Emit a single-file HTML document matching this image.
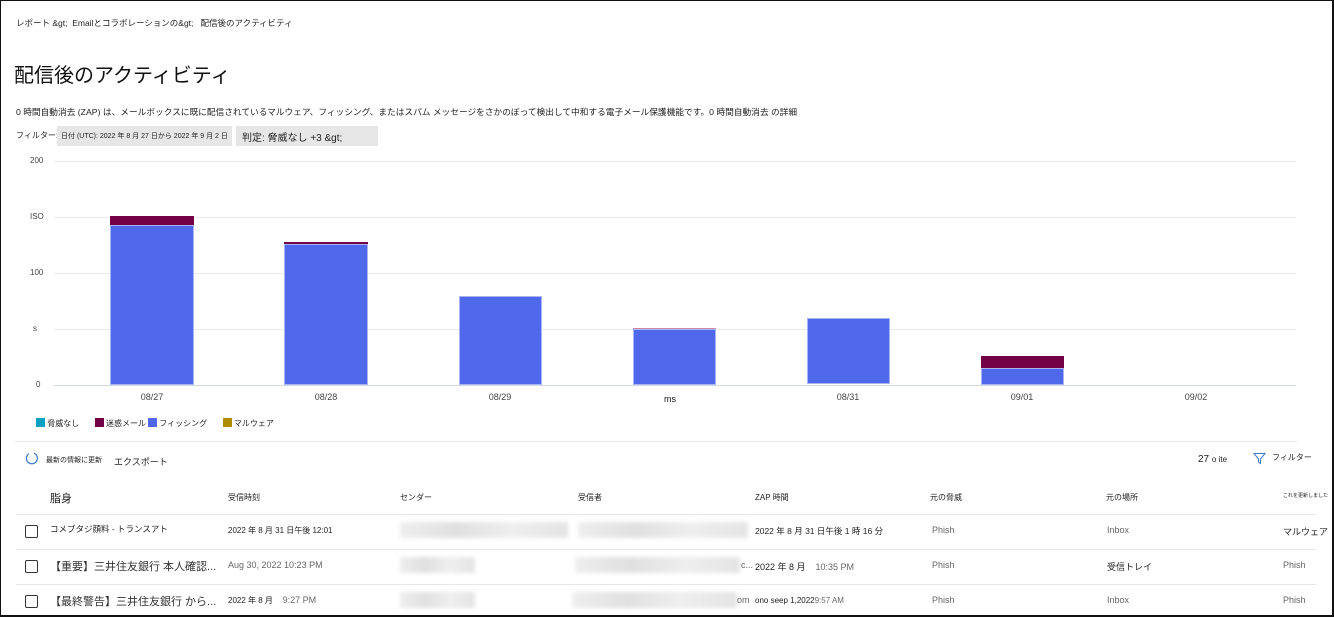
<!DOCTYPE html>
<html><head><meta charset="utf-8"><style>
*{margin:0;padding:0;box-sizing:border-box}
body{width:1334px;height:617px;background:#fff;font-family:"Liberation Sans","Noto Sans CJK JP",sans-serif;color:#222;position:relative;overflow:hidden}
.frame{position:absolute;left:0;top:0;width:1334px;height:617px;border:1px solid #111;border-right:2px solid #111;border-bottom:2px solid #111}
.a{position:absolute;white-space:nowrap}
.g{position:absolute;left:54px;width:1242px;height:1px;background:#e8e8ec}
.bar{position:absolute;background:#5068ec;border:1px solid #a9b4f5}
.pu{position:absolute;background:#730046}
.yl{position:absolute;left:30px;font-size:8px;color:#444}
.xl{position:absolute;top:392px;font-size:9px;color:#444;width:60px;text-align:center}
.row{position:absolute;left:16px;width:1300px;height:1px;background:#e6e6e6}
.cb{position:absolute;left:25px;width:13px;height:13px;border:1px solid #333;border-radius:2px}
.c{position:absolute;font-size:9px;white-space:nowrap}
.blur{position:absolute;height:16px;background:linear-gradient(90deg,#eee,#e0e0e0,#eee,#e4e4e4);filter:blur(2px)}
.gr{color:#666}
</style></head><body>
<div class="frame"></div>
<div class="a" style="left:16px;top:17px;font-size:8.5px">レポート &amp;gt;&nbsp; Emailとコラボレーションの&amp;gt;&nbsp;&nbsp; 配信後のアクティビティ</div>
<div class="a" style="left:14px;top:59px;font-size:20px;color:#111">配信後のアクティビティ</div>
<div class="a" style="left:16px;top:105px;font-size:8.7px">0 時間自動消去 (ZAP) は、メールボックスに既に配信されているマルウェア、フィッシング、またはスパム メッセージをさかのぼって検出して中和する電子メール保護機能です。0 時間自動消去 の詳細</div>
<div class="a" style="left:16px;top:130px;font-size:8px">フィルター:</div>
<div class="a" style="left:57px;top:126px;width:175px;height:20px;background:#e6e6e6;font-size:7px;padding:5px 4px">日付 (UTC): 2022 年 8 月 27 日から 2022 年 9 月 2 日</div>
<div class="a" style="left:236px;top:126px;width:142px;height:20px;background:#e6e6e6;font-size:10px;padding:3px 6px">判定: 脅威なし +3 &amp;gt;</div>

<div class="yl" style="top:156px">200</div>
<div class="yl" style="top:212px">ISO</div>
<div class="yl" style="top:268px">100</div>
<div class="yl" style="top:324px;left:33px">s</div>
<div class="yl" style="top:380px;left:36px">0</div>
<div class="g" style="top:161px"></div>
<div class="g" style="top:217px"></div>
<div class="g" style="top:273px"></div>
<div class="g" style="top:329px"></div>
<div class="g" style="top:385px;background:#d5d9e6"></div>

<div class="pu" style="left:110px;top:216px;width:84px;height:9px"></div>
<div class="bar" style="left:110px;top:225px;width:84px;height:160px"></div>
<div class="pu" style="left:284px;top:242px;width:84px;height:2px"></div>
<div class="bar" style="left:284px;top:244px;width:84px;height:141px"></div>
<div class="bar" style="left:459px;top:296px;width:83px;height:89px"></div>
<div class="pu" style="left:633px;top:328px;width:83px;height:1px;background:#c78aa8"></div>
<div class="bar" style="left:633px;top:329px;width:83px;height:56px"></div>
<div class="bar" style="left:807px;top:318px;width:83px;height:66px"></div>
<div class="pu" style="left:981px;top:356px;width:83px;height:12px"></div>
<div class="bar" style="left:981px;top:368px;width:83px;height:17px"></div>

<div class="xl" style="left:122px">08/27</div>
<div class="xl" style="left:296px">08/28</div>
<div class="xl" style="left:470px">08/29</div>
<div class="xl" style="left:640px;top:394px;color:#111">ms</div>
<div class="xl" style="left:818px">08/31</div>
<div class="xl" style="left:992px">09/01</div>
<div class="xl" style="left:1166px">09/02</div>

<div class="a" style="left:36px;top:418px;font-size:8px">
<span style="display:inline-block;width:9px;height:9px;background:#0aa0c4;vertical-align:-1px"></span> 脅威なし&nbsp;&nbsp;&nbsp;&nbsp;&nbsp;&nbsp;
<span style="display:inline-block;width:9px;height:9px;background:#730046;vertical-align:-1px"></span> 迷惑メール<span style="display:inline-block;width:9px;height:9px;background:#5068ec;vertical-align:-1px;margin-left:2px"></span> フィッシング&nbsp;&nbsp;&nbsp;&nbsp;&nbsp;&nbsp;
<span style="display:inline-block;width:9px;height:9px;background:#b08c00;vertical-align:-1px"></span> マルウェア</div>
<div class="a" style="left:15px;top:441px;width:1282px;height:1px;background:#e6e6e6"></div>

<svg class="a" style="left:25px;top:451px" width="15" height="15" viewBox="0 0 15 15"><path d="M9 2.2A5.5 5.5 0 1 1 4 2.6" fill="none" stroke="#3a7bd5" stroke-width="1.2"/></svg>
<div class="a" style="left:46px;top:455px;font-size:7px">最新の情報に更新</div>
<div class="a" style="left:114px;top:455px;font-size:9px">エクスポート</div>
<div class="a" style="left:1198px;top:454px;font-size:10px">27 <span style="font-size:8px">o ite</span></div>
<svg class="a" style="left:1253px;top:452px" width="13" height="13" viewBox="0 0 13 13"><path d="M1 1.5h11L7.5 7v4.5L5.5 10V7z" fill="none" stroke="#3a7bd5" stroke-width="1"/></svg>
<div class="a" style="left:1272px;top:452px;font-size:8px">フィルター</div>

<div class="c" style="left:50px;top:490px;font-size:11px">脂身</div>
<div class="c" style="left:228px;top:492px;font-size:8px">受信時刻</div>
<div class="c" style="left:400px;top:492px;font-size:8px">センダー</div>
<div class="c" style="left:578px;top:492px;font-size:8px">受信者</div>
<div class="c" style="left:755px;top:492px;font-size:8px">ZAP 時間</div>
<div class="c" style="left:930px;top:492px;font-size:8px">元の脅威</div>
<div class="c" style="left:1106px;top:492px;font-size:8px">元の場所</div>
<div class="c" style="left:1283px;top:492px;font-size:5px">これを更新しました</div>
<div class="row" style="top:514px"></div>
<div class="row" style="top:549px"></div>
<div class="row" style="top:584px"></div>

<div class="cb" style="top:525px"></div>
<div class="c" style="left:50px;top:523px;font-size:8.5px">コメブタジ顔料 - トランスアト</div>
<div class="c" style="left:228px;top:525px;font-size:8px">2022 年 8 月 31 日午後 12:01</div>
<div class="blur" style="left:400px;top:522px;width:168px"></div>
<div class="blur" style="left:578px;top:522px;width:170px"></div>
<div class="c" style="left:755px;top:525px;font-size:8.5px">2022 年 8 月 31 日午後 1 時 16 分</div>
<div class="c gr" style="left:932px;top:525px">Phish</div>
<div class="c gr" style="left:1107px;top:525px">Inbox</div>
<div class="c" style="left:1283px;top:525px">マルウェア</div>

<div class="cb" style="top:560px"></div>
<div class="c" style="left:50px;top:558px;font-size:11px;color:#333">【重要】三井住友銀行 本人確認...</div>
<div class="c gr" style="left:228px;top:560px">Aug 30, 2022 10:23 PM</div>
<div class="blur" style="left:400px;top:557px;width:75px"></div>
<div class="blur" style="left:575px;top:557px;width:165px"></div>
<div class="c gr" style="left:741px;top:560px">c...</div>
<div class="c" style="left:755px;top:560px">2022 年 8 月 <span class="gr">&nbsp;&nbsp;&nbsp;10:35 PM</span></div>
<div class="c gr" style="left:932px;top:560px">Phish</div>
<div class="c" style="left:1107px;top:560px">受信トレイ</div>
<div class="c gr" style="left:1283px;top:560px">Phish</div>

<div class="cb" style="top:595px"></div>
<div class="c" style="left:50px;top:593px;font-size:11px;color:#333">【最終警告】三井住友銀行 から...</div>
<div class="c" style="left:228px;top:595px;font-size:8px">2022 年 8 月 <span class="gr" style="font-size:9px">&nbsp;&nbsp;&nbsp;9:27 PM</span></div>
<div class="blur" style="left:400px;top:592px;width:75px"></div>
<div class="blur" style="left:572px;top:592px;width:165px"></div>
<div class="c gr" style="left:737px;top:595px">om</div>
<div class="c" style="left:755px;top:596px;font-size:8px">ono seep 1,2022<span class="gr">9:57 AM</span></div>
<div class="c gr" style="left:932px;top:595px">Phish</div>
<div class="c gr" style="left:1107px;top:595px">Inbox</div>
<div class="c gr" style="left:1283px;top:595px">Phish</div>
</body></html>
